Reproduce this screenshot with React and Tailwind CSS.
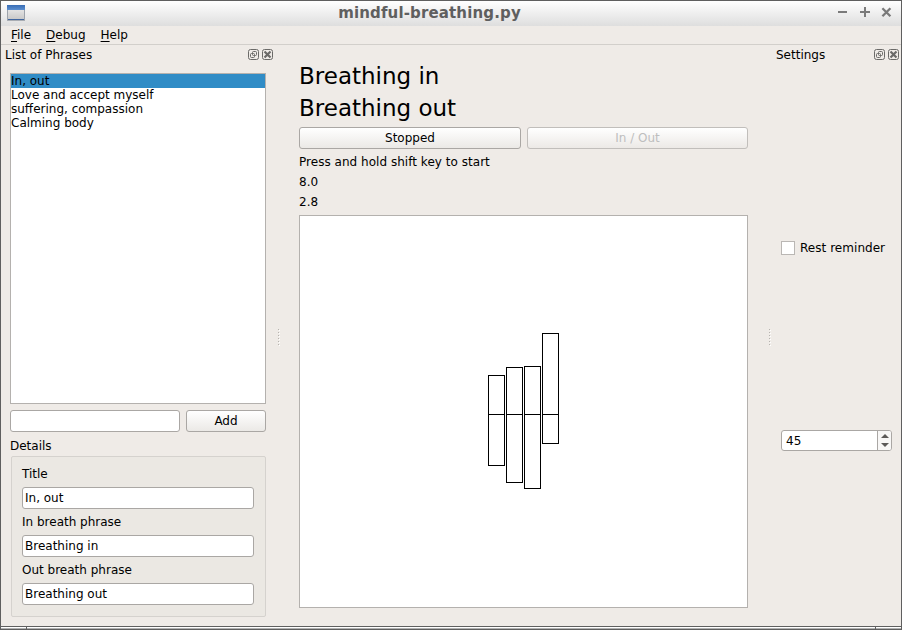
const phrases = ['In, out', 'Love and accept myself', 'suffering, compassion', 'Calming body'];

const fields = [
  { label: 'Title', value: 'In, out' },
  { label: 'In breath phrase', value: 'Breathing in' },
  { label: 'Out breath phrase', value: 'Breathing out' },
];

// One pair per breath: inhale above the axis, exhale below it.
const breaths = [
  { x: 188, up: 39, down: 51 },
  { x: 206, up: 47, down: 68 },
  { x: 224, up: 48, down: 74 },
  { x: 242, up: 81, down: 29 },
];
const AXIS = 198.5;

function AppIcon() {
  return (
    <svg width="18" height="17" viewBox="0 0 18 17" shapeRendering="crispEdges">
      <defs>
        <linearGradient id="body" x1="0" y1="0" x2="0" y2="1">
          <stop offset="0" stopColor="#e6e6e6" />
          <stop offset="1" stopColor="#c9c9c9" />
        </linearGradient>
        <linearGradient id="cap" x1="0" y1="0" x2="0" y2="1">
          <stop offset="0" stopColor="#376cb4" />
          <stop offset="1" stopColor="#5c8fd0" />
        </linearGradient>
      </defs>
      <rect x="0" y="0" width="18" height="16" fill="#9da3ab" />
      <rect x="1" y="4" width="16" height="10" fill="url(#body)" />
      <rect x="0" y="0" width="18" height="5" fill="url(#cap)" />
      <rect x="1" y="14" width="16" height="1" fill="#40669f" />
      <rect x="0" y="15" width="18" height="1" fill="#a9adb3" />
    </svg>
  );
}

function DockButtons() {
  return (
    <div className="flex gap-[3px]">
      <svg width="11" height="11" viewBox="0 0 11 11" fill="none" stroke="#6b6a68">
        <rect x="0.5" y="0.5" width="10" height="10" rx="2" />
        <rect x="4.5" y="2.5" width="4" height="4" rx="1" />
        <rect x="2.5" y="4.5" width="4" height="4" rx="1" />
      </svg>
      <svg width="11" height="11" viewBox="0 0 11 11" fill="none" stroke="#6b6a68">
        <rect x="0.5" y="0.5" width="10" height="10" rx="2" />
        <path d="M2.5 2.5L8.5 8.5M8.5 2.5L2.5 8.5" strokeWidth="2.2" />
      </svg>
    </div>
  );
}

function Grip() {
  return (
    <svg width="3" height="18" viewBox="0 0 3 18" shapeRendering="crispEdges">
      {[0, 3, 6, 9, 12, 15].map((y) => (
        <g key={y}>
          <rect x="0" y={y} width="1" height="1" fill="#b6b3af" />
          <rect x="1" y={y + 1} width="1" height="1" fill="#fff" />
        </g>
      ))}
    </svg>
  );
}

function MenuItem({ text }) {
  return (
    <span>
      <span className="underline decoration-1 underline-offset-2">{text[0]}</span>
      {text.slice(1)}
    </span>
  );
}

function TitleBar() {
  return (
    <header className="flex h-[25px] shrink-0 items-start bg-linear-to-b from-white to-[#dedede]">
      <div className="w-[57px] pt-1 pl-[6px]">
        <AppIcon />
      </div>
      <h1 className="flex-1 text-center text-[15px] leading-[24px] font-bold tracking-[0.14px] text-[#5f5f5f]">
        mindful-breathing.py
      </h1>
      <div className="flex w-[100px] justify-end pt-[6px] pr-[8px]">
        <svg width="56" height="11" viewBox="0 0 56 11" stroke="#7a7a7a" strokeWidth="2" fill="none">
          <path d="M1 5H10M23 5H33M28 0V10" />
          <path d="M45.4 1.2L53.4 9.2M53.4 1.2L45.4 9.2" strokeWidth="2.3" />
        </svg>
      </div>
    </header>
  );
}

function PhrasesPanel() {
  return (
    <aside className="flex w-[275px] shrink-0 flex-col">
      <div className="flex h-[28px] items-start justify-between pt-[3px] pr-[3px] pl-1">
        <span className="leading-[14px]">List of Phrases</span>
        <div className="pt-[1px]">
          <DockButtons />
        </div>
      </div>
      <div className="flex flex-col pr-[10px] pl-[9px]">
        <ul className="h-[331px] border border-[#b4b1ae] bg-white">
          {phrases.map((p, i) => (
            <li key={p} className={i === 0 ? 'h-[14px] bg-[#308cc6] leading-[14px]' : 'h-[14px] leading-[14px]'}>
              {p}
            </li>
          ))}
        </ul>
        <div className="mt-[6px] flex gap-[6px]">
          <div className="h-[22px] w-[170px] rounded-[3px] border border-[#aaa7a4] bg-white" />
          <button className="h-[22px] w-[80px] rounded-[3px] border border-[#aaa7a4] bg-linear-to-b from-white to-[#ebe9e6] leading-[20px]">
            Add
          </button>
        </div>
        <div className="mt-[7px] leading-[14px]">Details</div>
        <div className="mt-[3px] ml-[1px] h-[161px] rounded-[2px] border border-[#d5d2ce] bg-[#ebe8e3] px-[10px] pt-[10px]">
          {fields.map((f) => (
            <div key={f.label} className="h-[48px]">
              <div className="h-[20px] leading-[14px]">{f.label}</div>
              <div className="h-[22px] w-[232px] rounded-[3px] border border-[#aaa7a4] bg-white px-[2px] leading-[20px]">
                {f.value}
              </div>
            </div>
          ))}
        </div>
      </div>
    </aside>
  );
}

function BreathChart() {
  return (
    <div className="mt-[3px] h-[393px] border border-[#b4b1ae] bg-white">
      <svg width="447" height="391" viewBox="0 0 447 391" fill="none" stroke="#000" shapeRendering="crispEdges">
        {breaths.map((b) => (
          <g key={b.x}>
            <rect x={b.x + 0.5} y={AXIS - b.up} width="16" height={b.up} />
            <rect x={b.x + 0.5} y={AXIS} width="16" height={b.down} />
          </g>
        ))}
      </svg>
    </div>
  );
}

function BreathingPanel() {
  return (
    <main className="flex w-[449px] shrink-0 flex-col pt-[15px]">
      <div className="h-[32px] text-[23px] leading-[32px]">Breathing in</div>
      <div className="h-[32px] text-[23px] leading-[32px]">Breathing out</div>
      <div className="mt-[3px] flex gap-[6px]">
        <button className="h-[22px] w-[222px] rounded-[3px] border border-[#aaa7a4] bg-linear-to-b from-white to-[#ebe9e6] leading-[20px]">
          Stopped
        </button>
        <button
          disabled
          className="h-[22px] w-[221px] rounded-[3px] border border-[#c1bebb] bg-linear-to-b from-white to-[#ece9e6] leading-[20px] text-[#bebebe]"
        >
          In / Out
        </button>
      </div>
      <div className="mt-[3px] h-[20px] leading-[20px] tracking-[0.03px]">Press and hold shift key to start</div>
      <div className="h-[20px] leading-[20px]">8.0</div>
      <div className="h-[20px] leading-[20px]">2.8</div>
      <BreathChart />
    </main>
  );
}

function SettingsPanel() {
  return (
    <aside className="flex flex-1 flex-col">
      <div className="flex h-[28px] items-start justify-between pt-[3px] pr-[2px]">
        <span className="leading-[14px]">Settings</span>
        <div className="pt-[1px]">
          <DockButtons />
        </div>
      </div>
      <label className="mt-[168px] flex h-[14px] items-center gap-[5px] pl-[5px]">
        <span className="h-[14px] w-[14px] border border-[#bab7b4] bg-white" />
        <span className="leading-[14px] tracking-[0.04px]">Rest reminder</span>
      </label>
      <div className="mt-[175px] ml-[5px] flex h-[21px] w-[111px] overflow-hidden rounded-[3px] border border-[#aaa7a4] bg-white">
        <span className="flex-1 pl-1 leading-[20px]">45</span>
        <span className="flex w-[14px] items-center justify-center border-l border-[#aaa7a4] bg-[#f8f7f6]">
          <svg width="8" height="13" viewBox="0 0 8 13" fill="#5c5a58">
            <path d="M0 4L4 0L8 4ZM0 9H8L4 13Z" />
          </svg>
        </span>
      </div>
    </aside>
  );
}

export default function App() {
  return (
    <div
      className="flex h-[630px] w-[902px] flex-col overflow-hidden border border-[#5f5f5f] bg-[#efebe7] text-[12px] text-black"
      style={{ fontFamily: '"DejaVu Sans", sans-serif' }}
    >
      <TitleBar />
      <nav className="flex h-[19px] shrink-0 gap-[15px] border-b border-[#d2cfcb] pl-[10px] leading-[18px]">
        <MenuItem text="File" />
        <MenuItem text="Debug" />
        <MenuItem text="Help" />
      </nav>
      <div className="flex min-h-0 flex-1">
        <PhrasesPanel />
        <div className="flex w-[23px] shrink-0 pt-[284px] pl-[2px]">
          <Grip />
        </div>
        <BreathingPanel />
        <div className="flex w-[28px] shrink-0 pt-[284px] pl-[21px]">
          <Grip />
        </div>
        <SettingsPanel />
      </div>
      <footer className="flex h-[3px] shrink-0 border-t border-[#5f5f5f]">
        <div className="h-[2px] w-[25px] border-b border-[#b0b0b0] bg-white" />
        <div className="h-[2px] w-px bg-[#5f5f5f]" />
        <div className="h-[2px] flex-1 border-b border-[#b0b0b0] bg-white" />
        <div className="h-[2px] w-px bg-[#5f5f5f]" />
        <div className="h-[2px] w-[25px] border-b border-[#b0b0b0] bg-white" />
      </footer>
    </div>
  );
}
